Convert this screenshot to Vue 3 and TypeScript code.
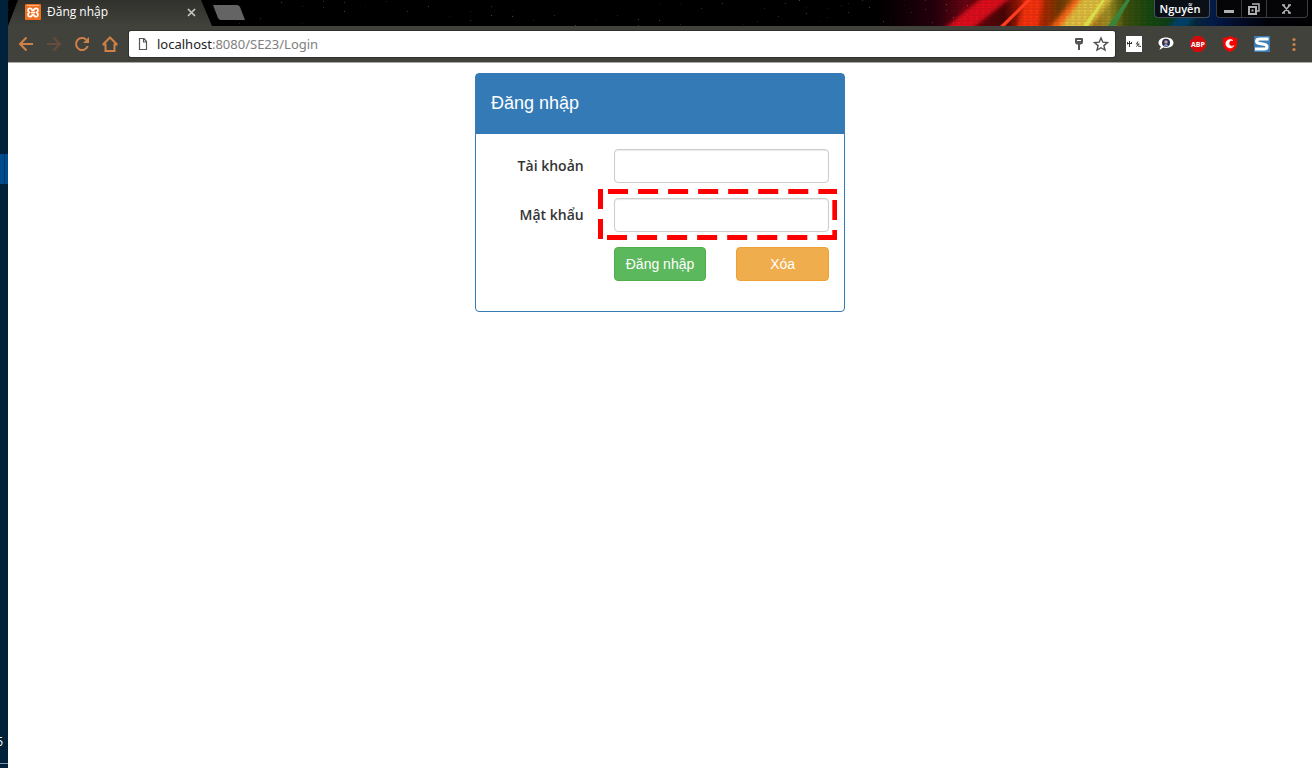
<script setup lang="ts">
import { ref } from 'vue'

interface Star {
  x: number
  y: number
  o: number
}

const address = ref('localhost:8080/SE23/Login')
const account = ref('')
const password = ref('')

const stars: Star[] = Array.from({ length: 80 }, (_, i) => ({
  x: (i * 137 + (i % 7) * 31) % 980,
  y: (i * 11 + (i % 5) * 3) % 26,
  o: 0.08 + (i % 4) * 0.06,
}))

const dashesTop = [10, 40, 70, 100, 130, 160, 190, 220]
const dashesBottom = [9, 39, 69, 99, 129, 159, 189, 219]

function clearForm(): void {
  account.value = ''
  password.value = ''
}
</script>

<template>
  <div class="screen">
    <aside class="desktop">
      <span class="desktop-tile"></span>
      <span class="desktop-clock">5</span>
    </aside>

    <div class="browser">
      <header class="titlebar">
        <svg class="theme" viewBox="0 0 1304 26" preserveAspectRatio="xMaxYMid slice" aria-hidden="true">
          <defs>
            <pattern id="hex" width="6" height="6" patternUnits="userSpaceOnUse">
              <path d="M0 1.5 1.5 0h3L6 1.5 4.5 3h-3L0 1.5M1.5 3 0 4.5 1.5 6M4.5 3 6 4.5 4.5 6" fill="none" stroke="#000" stroke-opacity=".2" stroke-width=".8" />
            </pattern>
            <linearGradient id="spectrum" gradientUnits="userSpaceOnUse" x1="870" y1="0" x2="1304" y2="0">
              <stop offset="0" stop-color="#000" />
              <stop offset=".13" stop-color="#24000c" />
              <stop offset=".2" stop-color="#6a0412" />
              <stop offset=".29" stop-color="#4a0505" />
              <stop offset=".34" stop-color="#c02004" />
              <stop offset=".39" stop-color="#a02c00" />
              <stop offset=".42" stop-color="#6e3a04" />
              <stop offset=".47" stop-color="#b06010" />
              <stop offset=".53" stop-color="#a09024" />
              <stop offset=".57" stop-color="#40500c" />
              <stop offset=".62" stop-color="#1a4a10" />
              <stop offset=".67" stop-color="#0c4014" />
              <stop offset=".71" stop-color="#063038" />
              <stop offset=".77" stop-color="#031a48" />
              <stop offset=".84" stop-color="#020a24" />
              <stop offset=".9" stop-color="#010208" />
              <stop offset="1" stop-color="#000" />
            </linearGradient>
            <filter id="soft" x="-20%" y="-40%" width="140%" height="180%"><feGaussianBlur stdDeviation="2" /></filter>
          </defs>
          <rect width="1304" height="26" fill="#000" />
          <rect x="870" width="434" height="26" fill="url(#spectrum)" />
          <g filter="url(#soft)">
            <path d="M932 32 978-6h30l-48 38z" fill="#e00c1c" />
            <path d="M1008 32 1018-6h18l-6 38z" fill="#f83008" />
            <path d="M1042 32 1076-6h32l-30 38z" fill="#e2c040" />
            <path d="M1038 32 1070-6h7l-28 38z" fill="#ff6414" />
            <path d="M1156 32 1188-6h14l-26 38z" fill="#06426a" />
          </g>
          <rect x="930" width="270" height="26" fill="url(#hex)" />
          <path d="M992 26 1019 0h4l-26 26z" fill="#ff3b20" />
          <path d="M1075 26 1094 0h3l-17 26z" fill="#d8dc48" />
          <path d="M1100 26 1118 0h4l-15 26z" fill="#38843a" />
          <rect v-for="(s, i) in stars" :key="i" :x="s.x" :y="s.y" width="1" height="1" fill="#fff" :opacity="s.o" />
        </svg>

        <div class="tab">
          <svg class="favicon" viewBox="0 0 16 16" aria-hidden="true">
            <rect width="16" height="16" rx="1" fill="#f07020" />
            <path d="M2 1.5h12" stroke="#f8b080" />
            <path d="M7 5.500C6 3.600 3 4 3 6.200c0 1 .6 1.800 1.300 2.300C3.600 9 3 9.800 3 10.800c0 2.200 3 2.600 4 .700M9 5.500c1-1.900 4-1.500 4 .700 0 1-.6 1.800-1.300 2.300.700.500 1.300 1.300 1.300 2.300 0 2.200-3 2.600-4 .700M6.500 5.500 8 6.500l1.500-1M6.500 11.500 8 10.500l1.500 1M6 8.500h4" fill="none" stroke="#fff" stroke-width="1.700" />
          </svg>
          <span class="tab-title">Đăng nhập</span>
          <button class="tab-close" type="button" aria-label="Close tab">
            <svg width="9" height="9" viewBox="0 0 9 9"><path d="m1 1 7 7M8 1 1 8" stroke="#c6c6c2" stroke-width="1.700" /></svg>
          </button>
        </div>
        <button class="new-tab" type="button" aria-label="New tab">
          <svg width="34" height="18" viewBox="0 0 34 18"><path d="M1 2h24q2 0 3 2l5 13H9q-2 0-3-2z" fill="#646464" /></svg>
        </button>

        <div class="window-tools">
          <button class="profile" type="button">Nguyễn</button>
          <div class="window-buttons">
            <button class="minimise" type="button" aria-label="Minimize">
              <svg width="12" height="12" viewBox="0 0 12 12"><path d="M1 8.500h10" stroke="#b0b0b0" stroke-width="3" /></svg>
            </button>
            <button class="restore" type="button" aria-label="Restore">
              <svg width="12" height="12" viewBox="0 0 12 12" fill="none" stroke="#b0b0b0"><path d="M4 1h7v7H9" stroke-width="1.500" /><path d="M1 4h7v7H1z" stroke-width="2" /><path d="M3.500 7.500h2" stroke-width="2" /></svg>
            </button>
            <button class="close" type="button" aria-label="Close">
              <svg width="12" height="12" viewBox="0 0 12 12"><path d="m2 2 7 8M9 2l-7 8M1 2h3M7 2h3M1 10h3M7 10h3" stroke="#b0b0b0" stroke-width="1.600" /></svg>
            </button>
          </div>
        </div>
      </header>

      <nav class="toolbar">
        <div class="nav-buttons">
          <button type="button" aria-label="Back">
            <svg width="16" height="16" viewBox="0 0 16 16" fill="none" stroke="#d08148" stroke-width="2"><path d="M15 8H2.500M8.500 1.500 2 8l6.500 6.500" /></svg>
          </button>
          <button type="button" aria-label="Forward">
            <svg width="16" height="16" viewBox="0 0 16 16" fill="none" stroke="#664d3b" stroke-width="2"><path d="M1 8h12.500M7.500 1.500 14 8l-6.500 6.500" /></svg>
          </button>
          <button type="button" aria-label="Reload">
            <svg width="16" height="16" viewBox="0 0 16 16"><path d="M13.700 10A6 6 0 1 1 12.300 3.800" fill="none" stroke="#d08148" stroke-width="2" /><path d="M15 1v6H9z" fill="#d08148" /></svg>
          </button>
          <button type="button" aria-label="Home">
            <svg width="16" height="16" viewBox="0 0 16 16" fill="none" stroke="#d08148" stroke-width="2"><path d="M1 8.500 8 1.500l7 7M.500 8.500h3V15h9V8.500h3" /></svg>
          </button>
        </div>

        <div class="address">
          <svg width="10" height="12" viewBox="0 0 10 12" fill="none" stroke="#555" aria-hidden="true"><path d="M1.500.500H6L8.500 3.500v8h-7zM5.500.500V4h3" stroke-width="1.200" /></svg>
          <a class="url" href="#" :aria-label="address"><span class="host">localhost</span>:8080/SE23/Login</a>
          <button type="button" aria-label="Saved passwords">
            <svg width="10" height="14" viewBox="0 0 10 14"><path d="M2 1h6q1 0 1 1v3q0 2-2 2.500H6V13H4V7.500H3Q1 7 1 5V2q0-1 1-1z" fill="#555" /><path d="M3 3.500h4" stroke="#fff" /></svg>
          </button>
          <button type="button" aria-label="Bookmark">
            <svg width="16" height="16" viewBox="0 0 16 16"><path d="m8 2 1.800 4.200 4.600.400-3.500 3 1.100 4.500L8 11.700l-4 2.400 1.100-4.500-3.500-3 4.600-.400z" fill="none" stroke="#505050" stroke-width="1.400" /></svg>
          </button>
        </div>

        <div class="extensions">
          <button type="button" aria-label="Dictionary">
            <svg width="16" height="16" viewBox="0 0 16 16"><path d="M0 0h16v16H0z" fill="#fff" /><path d="M1 7.500h5M1.500 6v2.500M5.500 6v2M3.500 5v6M12 5.500 10.500 8h3M10.500 10.500l2-2.500M12 10l3 .500" fill="none" stroke="#333" /></svg>
          </button>
          <button type="button" aria-label="Chat">
            <svg width="16" height="16" viewBox="0 0 16 16"><path d="M8 1.500c4.500 0 7.500 2.200 7.500 5.300S12.500 12 8 12c-1 0-2-.100-2.800-.400L1.500 14l1.300-3.600C1.300 9.500.500 8.200.500 6.800.500 3.700 3.500 1.500 8 1.500z" fill="#fff" /><circle cx="8" cy="6.800" r="4" fill="#26304f" /><circle cx="8" cy="6" r="1.800" fill="#c09aa0" /><path d="M5.500 10q2.500-4 5 0z" fill="#8b9ac8" /></svg>
          </button>
          <button type="button" aria-label="Adblock Plus">
            <svg width="16" height="16" viewBox="0 0 16 16"><path d="M5 0h6l5 5v6l-5 5H5l-5-5V5z" fill="#d00c0c" /><text class="abp" x="8" y="11" text-anchor="middle">ABP</text></svg>
          </button>
          <button type="button" aria-label="Shield">
            <svg width="16" height="16" viewBox="0 0 16 16"><path d="M8 0q3 2 7 2v6q0 5-7 8Q1 13 1 8V2q4 0 7-2z" fill="#f00" /><path d="M11 4.500A4.300 4.300 0 1 0 12 9.500 3 3 0 1 1 11 4.500z" fill="#fff" stroke="#fff" stroke-width=".6" /></svg>
          </button>
          <button type="button" aria-label="S extension">
            <svg width="16" height="16" viewBox="0 0 16 16"><path d="M0 0h16v16H0z" fill="#3d7db5" /><path d="M14.500 3H6C1.500 3 1.500 6.800 5.500 7.500l4.500.800c4 .700 4 4.700 0 4.700H1" fill="none" stroke="#fff" stroke-width="3" /></svg>
          </button>
          <button type="button" aria-label="Menu">
            <svg width="16" height="16" viewBox="0 0 16 16" fill="#d08148"><circle cx="8" cy="3.500" r="1.600" /><circle cx="8" cy="8.500" r="1.600" /><circle cx="8" cy="13.500" r="1.600" /></svg>
          </button>
        </div>
      </nav>

      <main class="page">
        <section class="panel">
          <h1 class="panel-heading">Đăng nhập</h1>
          <form class="panel-body" @submit.prevent>
            <label for="account">Tài khoản</label>
            <div class="field"><input id="account" v-model="account" type="text" /></div>
            <label for="password">Mật khẩu</label>
            <div class="field">
              <input id="password" v-model="password" type="password" />
              <svg class="marker" viewBox="0 0 239 51" preserveAspectRatio="none" fill="#f00" aria-hidden="true">
                <rect v-for="x in dashesTop" :key="'t' + x" :x="x" y="0" width="20" height="5" />
                <rect v-for="x in dashesBottom" :key="'b' + x" :x="x" y="46" width="20" height="5" />
                <path d="M0 0h5v20H0zM0 30h5v20H0zM234 11h5v20h-5zM234 41h5v10h-5z" />
              </svg>
            </div>
            <button class="btn login" type="submit">Đăng nhập</button>
            <button class="btn clear" type="button" @click="clearForm">Xóa</button>
          </form>
        </section>
      </main>
    </div>
  </div>
</template>

<style>
body {
  margin: 0;
  background: #fff;
}
</style>

<style scoped>
* {
  box-sizing: border-box;
}

button {
  margin: 0;
  padding: 0;
  border: 0;
  background: none;
  font: inherit;
}

svg {
  display: block;
}

.screen {
  display: flex;
  min-height: 100vh;
  font-family: "Open Sans", "Noto Sans", sans-serif;
}

.desktop {
  display: flex;
  flex: 0 0 8px;
  flex-direction: column;
  justify-content: space-between;
  padding: 154px 0 4px;
  overflow: hidden;
  background: #00213a;
}

.desktop-tile {
  height: 30px;
  border-right: 3px solid #004b8c;
  background: linear-gradient(90deg, #004b8c 4px, #003566 4px);
}

.desktop-clock {
  display: flex;
  justify-content: flex-end;
  height: 30px;
  padding-right: 5px;
  border-bottom: 1px solid #8093a2;
  color: #fff;
  font-size: 12px;
  line-height: 16px;
}

.browser {
  display: flex;
  flex: 1;
  flex-direction: column;
  min-width: 0;
}

.titlebar {
  position: relative;
  display: flex;
  height: 26px;
  background: #000;
}

.theme {
  position: absolute;
  inset: 0;
  width: 100%;
  height: 100%;
}

.tab {
  position: relative;
  display: flex;
  align-items: center;
  width: 204px;
  padding: 0 12px 2px 17px;
  background: linear-gradient(#30312c, #42423c);
  clip-path: polygon(10px 0, 193px 0, 100% 100%, 0 100%);
}

.favicon {
  width: 16px;
  height: 16px;
}

.tab-title {
  flex: 1;
  padding-left: 6px;
  color: #fff;
  font-size: 12px;
  line-height: 24px;
}

.tab-close {
  padding: 4px;
}

.new-tab {
  position: relative;
  height: 26px;
  padding: 0 0 2px;
}

.window-tools {
  position: relative;
  display: flex;
  gap: 6px;
  height: 18px;
  margin: 0 4px 0 auto;
}

.profile {
  width: 56px;
  padding-right: 4px;
  border: 1px solid #47505c;
  border-top: 0;
  border-radius: 0 0 4px 4px;
  background: #0a1016;
  color: #fff;
  font-size: 11px;
  font-weight: 600;
  line-height: 16px;
}

.window-buttons {
  display: flex;
  border: 1px solid #3c3c42;
  border-top: 0;
  border-radius: 0 0 4px 4px;
  background: #050508;
}

.window-buttons button {
  display: flex;
  align-items: center;
  justify-content: center;
  width: 24px;
}

.window-buttons .restore {
  width: 26px;
  border: solid #3c3c42;
  border-width: 0 1px;
}

.window-buttons .close {
  width: 40px;
}

.toolbar {
  display: flex;
  align-items: center;
  height: 37px;
  padding: 0 10px;
  border-bottom: 1px solid #aaa9a5;
  background: #42423c;
}

.nav-buttons {
  display: flex;
  gap: 12px;
  margin-right: 11px;
}

.address {
  display: flex;
  flex: 1;
  align-items: center;
  min-width: 0;
  height: 26px;
  padding: 0 6px 0 9px;
  border-radius: 2px;
  background: #fff;
  box-shadow: 0 0 0 1px #30312c;
}

.url {
  flex: 1;
  margin-left: 9px;
  overflow: hidden;
  color: #808080;
  font-family: "Noto Sans", "Open Sans", sans-serif;
  font-size: 13px;
  line-height: 20px;
  text-decoration: none;
  white-space: nowrap;
}

.host {
  color: #222;
}

.address button + button {
  margin-left: 9px;
}

.extensions {
  display: flex;
  gap: 16px;
  margin-left: 11px;
}

.abp {
  fill: #fff;
  font-size: 7px;
  font-weight: 700;
}

.page {
  flex: 1;
  padding: 10px 16px;
  background: #fff;
}

.panel {
  width: 100%;
  max-width: 370px;
  margin: 0 auto;
  border: 1px solid #337ab7;
  border-radius: 4px;
  background: #fff;
}

.panel-heading {
  margin: 0;
  padding: 19px 15px 21px;
  background: #337ab7;
  color: #fff;
  font-family: "Liberation Sans", Arial, sans-serif;
  font-size: 18px;
  font-weight: 400;
  line-height: 20px;
}

.panel-body {
  display: grid;
  grid-template-columns: repeat(3, minmax(0, 1fr));
  gap: 15px 30px;
  padding: 15px 15px 30px;
}

label {
  color: #333;
  font-size: 14px;
  font-weight: 600;
  line-height: 34px;
  text-align: right;
  white-space: nowrap;
}

.field {
  position: relative;
  grid-column: span 2;
}

input {
  display: block;
  width: 100%;
  height: 34px;
  padding: 6px 12px;
  border: 1px solid #ccc;
  border-radius: 4px;
  box-shadow: inset 0 1px 1px rgba(0, 0, 0, 0.08);
  color: #555;
  font: 14px/20px "Liberation Sans", Arial, sans-serif;
}

.marker {
  position: absolute;
  top: -9px;
  left: -16px;
  width: calc(100% + 24px);
  height: 51px;
  pointer-events: none;
}

.btn {
  height: 34px;
  border: 1px solid;
  border-radius: 4px;
  color: #fff;
  font: 14px/20px "Liberation Sans", Arial, sans-serif;
  white-space: nowrap;
}

.login {
  grid-column: 2;
  border-color: #4cae4c;
  background: #5cb85c;
}

.clear {
  border-color: #eea236;
  background: #f0ad4e;
}
</style>
